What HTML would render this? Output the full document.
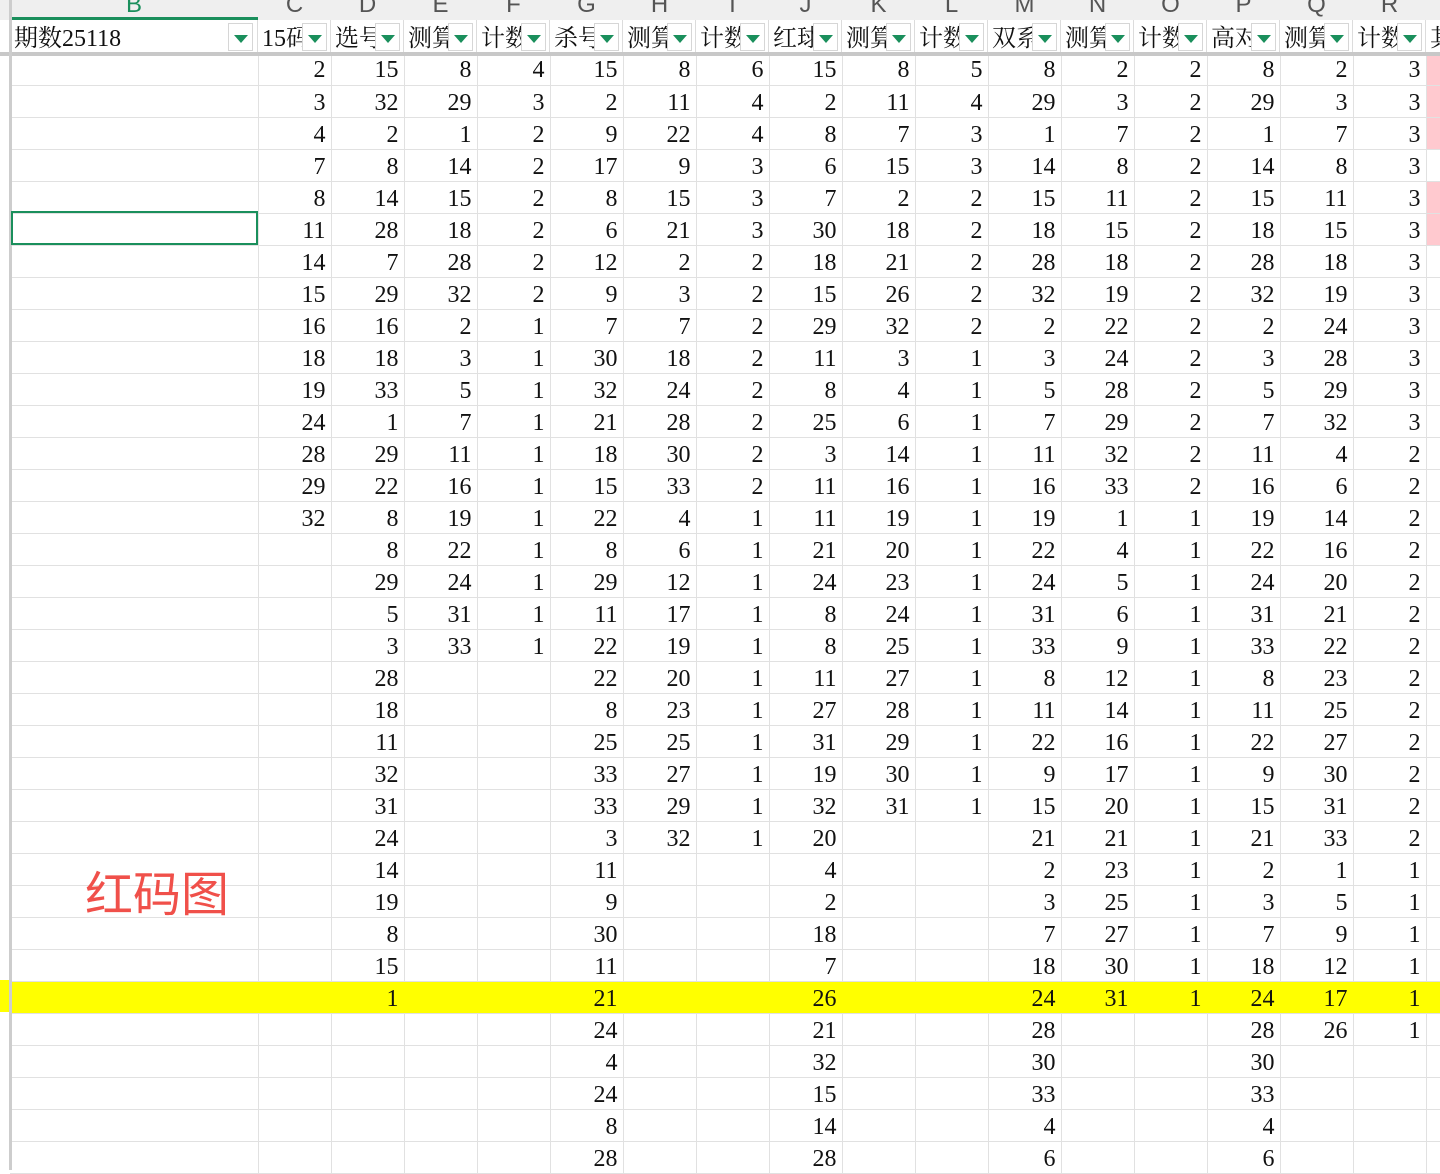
<!DOCTYPE html>
<html><head><meta charset="utf-8"><style>
body{margin:0;width:1440px;height:1170px;overflow:hidden;background:#fff;position:relative;font-family:"Liberation Serif","Noto Serif CJK SC",serif;}
.hdr{position:absolute;top:0;left:0;width:1440px;height:20px;background:#efefef;border-bottom:1px solid #d4d4d4;}
.hl{position:absolute;top:-9px;height:28px;font:24px "Liberation Sans",sans-serif;color:#555;text-align:center;line-height:28px;}
.frow{position:absolute;top:20px;left:0;width:1440px;height:32px;background:#fff;}
.fc{position:absolute;top:0;height:32px;overflow:hidden;border-right:1px solid #dcdcdc;font-size:24px;line-height:38px;color:#111;white-space:nowrap;padding-left:4px;box-sizing:border-box;}
.fb{position:absolute;top:3px;width:25px;height:28px;background:#fff;border:1px solid #d6d6d6;box-sizing:border-box;}
.fb:after{content:"";position:absolute;left:5px;top:11px;border-left:7px solid transparent;border-right:7px solid transparent;border-top:8px solid #1a8f5c;}
.bar{position:absolute;top:52px;left:0;width:1440px;height:4px;background:#c8c8c8;}
table{position:absolute;top:53px;left:10px;width:1436px;border-collapse:collapse;table-layout:fixed;}
tr{height:32px;}
td{height:31px;padding:4px 5px 0 0;box-sizing:border-box;border-right:1px solid #e1e1e1;border-bottom:1px solid #e1e1e1;text-align:right;font-size:24px;line-height:27px;color:#111;overflow:hidden;white-space:nowrap;}
.y td{background:#ff0;border-right-color:#ff0;}
.p{background:#ffc9cf;}
.vbar{position:absolute;top:0;left:9px;width:3px;height:1170px;background:#cdcdcd;}
.sel{position:absolute;left:11px;top:211px;width:247px;height:34px;border:2px solid #1a8f5c;box-sizing:border-box;}
.red{position:absolute;left:85px;top:855px;font:48px "Noto Sans CJK SC",sans-serif;color:#f0504a;}
</style></head><body>
<div class="hdr"></div>
<div style="position:absolute;left:12px;top:17px;width:246px;height:3px;background:#1a8f5c"></div>
<div class="hl" style="left:10px;width:248px;color:#1a8f5c">B</div>
<div class="hl" style="left:258px;width:73px">C</div><div class="hl" style="left:331px;width:73px">D</div><div class="hl" style="left:404px;width:73px">E</div><div class="hl" style="left:477px;width:73px">F</div><div class="hl" style="left:550px;width:73px">G</div><div class="hl" style="left:623px;width:73px">H</div><div class="hl" style="left:696px;width:73px">I</div><div class="hl" style="left:769px;width:73px">J</div><div class="hl" style="left:842px;width:73px">K</div><div class="hl" style="left:915px;width:73px">L</div><div class="hl" style="left:988px;width:73px">M</div><div class="hl" style="left:1061px;width:73px">N</div><div class="hl" style="left:1134px;width:73px">O</div><div class="hl" style="left:1207px;width:73px">P</div><div class="hl" style="left:1280px;width:73px">Q</div><div class="hl" style="left:1353px;width:73px">R</div>
<div class="frow">
<div class="fc" style="left:10px;width:248px">期数25118</div><div class="fb" style="left:228px"></div>
<div class="fc" style="left:258px;width:73px">15码</div><div class="fb" style="left:302px"></div>
<div class="fc" style="left:331px;width:73px">选号</div><div class="fb" style="left:375px"></div>
<div class="fc" style="left:404px;width:73px">测算</div><div class="fb" style="left:448px"></div>
<div class="fc" style="left:477px;width:73px">计数</div><div class="fb" style="left:521px"></div>
<div class="fc" style="left:550px;width:73px">杀号</div><div class="fb" style="left:594px"></div>
<div class="fc" style="left:623px;width:73px">测算</div><div class="fb" style="left:667px"></div>
<div class="fc" style="left:696px;width:73px">计数</div><div class="fb" style="left:740px"></div>
<div class="fc" style="left:769px;width:73px">红球</div><div class="fb" style="left:813px"></div>
<div class="fc" style="left:842px;width:73px">测算</div><div class="fb" style="left:886px"></div>
<div class="fc" style="left:915px;width:73px">计数</div><div class="fb" style="left:959px"></div>
<div class="fc" style="left:988px;width:73px">双系</div><div class="fb" style="left:1032px"></div>
<div class="fc" style="left:1061px;width:73px">测算</div><div class="fb" style="left:1105px"></div>
<div class="fc" style="left:1134px;width:73px">计数</div><div class="fb" style="left:1178px"></div>
<div class="fc" style="left:1207px;width:73px">高对</div><div class="fb" style="left:1251px"></div>
<div class="fc" style="left:1280px;width:73px">测算</div><div class="fb" style="left:1324px"></div>
<div class="fc" style="left:1353px;width:73px">计数</div><div class="fb" style="left:1397px"></div>
<div class="fc" style="left:1426px;width:30px">其</div>
</div>
<table>
<colgroup><col style="width:248px"><col style="width:73px"><col style="width:73px"><col style="width:73px"><col style="width:73px"><col style="width:73px"><col style="width:73px"><col style="width:73px"><col style="width:73px"><col style="width:73px"><col style="width:73px"><col style="width:73px"><col style="width:73px"><col style="width:73px"><col style="width:73px"><col style="width:73px"><col style="width:73px"><col style="width:20px"></colgroup>
<tr><td></td><td>2</td><td>15</td><td>8</td><td>4</td><td>15</td><td>8</td><td>6</td><td>15</td><td>8</td><td>5</td><td>8</td><td>2</td><td>2</td><td>8</td><td>2</td><td>3</td><td class="p"></td></tr>
<tr><td></td><td>3</td><td>32</td><td>29</td><td>3</td><td>2</td><td>11</td><td>4</td><td>2</td><td>11</td><td>4</td><td>29</td><td>3</td><td>2</td><td>29</td><td>3</td><td>3</td><td class="p"></td></tr>
<tr><td></td><td>4</td><td>2</td><td>1</td><td>2</td><td>9</td><td>22</td><td>4</td><td>8</td><td>7</td><td>3</td><td>1</td><td>7</td><td>2</td><td>1</td><td>7</td><td>3</td><td class="p"></td></tr>
<tr><td></td><td>7</td><td>8</td><td>14</td><td>2</td><td>17</td><td>9</td><td>3</td><td>6</td><td>15</td><td>3</td><td>14</td><td>8</td><td>2</td><td>14</td><td>8</td><td>3</td><td></td></tr>
<tr><td></td><td>8</td><td>14</td><td>15</td><td>2</td><td>8</td><td>15</td><td>3</td><td>7</td><td>2</td><td>2</td><td>15</td><td>11</td><td>2</td><td>15</td><td>11</td><td>3</td><td class="p"></td></tr>
<tr><td></td><td>11</td><td>28</td><td>18</td><td>2</td><td>6</td><td>21</td><td>3</td><td>30</td><td>18</td><td>2</td><td>18</td><td>15</td><td>2</td><td>18</td><td>15</td><td>3</td><td class="p"></td></tr>
<tr><td></td><td>14</td><td>7</td><td>28</td><td>2</td><td>12</td><td>2</td><td>2</td><td>18</td><td>21</td><td>2</td><td>28</td><td>18</td><td>2</td><td>28</td><td>18</td><td>3</td><td></td></tr>
<tr><td></td><td>15</td><td>29</td><td>32</td><td>2</td><td>9</td><td>3</td><td>2</td><td>15</td><td>26</td><td>2</td><td>32</td><td>19</td><td>2</td><td>32</td><td>19</td><td>3</td><td></td></tr>
<tr><td></td><td>16</td><td>16</td><td>2</td><td>1</td><td>7</td><td>7</td><td>2</td><td>29</td><td>32</td><td>2</td><td>2</td><td>22</td><td>2</td><td>2</td><td>24</td><td>3</td><td></td></tr>
<tr><td></td><td>18</td><td>18</td><td>3</td><td>1</td><td>30</td><td>18</td><td>2</td><td>11</td><td>3</td><td>1</td><td>3</td><td>24</td><td>2</td><td>3</td><td>28</td><td>3</td><td></td></tr>
<tr><td></td><td>19</td><td>33</td><td>5</td><td>1</td><td>32</td><td>24</td><td>2</td><td>8</td><td>4</td><td>1</td><td>5</td><td>28</td><td>2</td><td>5</td><td>29</td><td>3</td><td></td></tr>
<tr><td></td><td>24</td><td>1</td><td>7</td><td>1</td><td>21</td><td>28</td><td>2</td><td>25</td><td>6</td><td>1</td><td>7</td><td>29</td><td>2</td><td>7</td><td>32</td><td>3</td><td></td></tr>
<tr><td></td><td>28</td><td>29</td><td>11</td><td>1</td><td>18</td><td>30</td><td>2</td><td>3</td><td>14</td><td>1</td><td>11</td><td>32</td><td>2</td><td>11</td><td>4</td><td>2</td><td></td></tr>
<tr><td></td><td>29</td><td>22</td><td>16</td><td>1</td><td>15</td><td>33</td><td>2</td><td>11</td><td>16</td><td>1</td><td>16</td><td>33</td><td>2</td><td>16</td><td>6</td><td>2</td><td></td></tr>
<tr><td></td><td>32</td><td>8</td><td>19</td><td>1</td><td>22</td><td>4</td><td>1</td><td>11</td><td>19</td><td>1</td><td>19</td><td>1</td><td>1</td><td>19</td><td>14</td><td>2</td><td></td></tr>
<tr><td></td><td></td><td>8</td><td>22</td><td>1</td><td>8</td><td>6</td><td>1</td><td>21</td><td>20</td><td>1</td><td>22</td><td>4</td><td>1</td><td>22</td><td>16</td><td>2</td><td></td></tr>
<tr><td></td><td></td><td>29</td><td>24</td><td>1</td><td>29</td><td>12</td><td>1</td><td>24</td><td>23</td><td>1</td><td>24</td><td>5</td><td>1</td><td>24</td><td>20</td><td>2</td><td></td></tr>
<tr><td></td><td></td><td>5</td><td>31</td><td>1</td><td>11</td><td>17</td><td>1</td><td>8</td><td>24</td><td>1</td><td>31</td><td>6</td><td>1</td><td>31</td><td>21</td><td>2</td><td></td></tr>
<tr><td></td><td></td><td>3</td><td>33</td><td>1</td><td>22</td><td>19</td><td>1</td><td>8</td><td>25</td><td>1</td><td>33</td><td>9</td><td>1</td><td>33</td><td>22</td><td>2</td><td></td></tr>
<tr><td></td><td></td><td>28</td><td></td><td></td><td>22</td><td>20</td><td>1</td><td>11</td><td>27</td><td>1</td><td>8</td><td>12</td><td>1</td><td>8</td><td>23</td><td>2</td><td></td></tr>
<tr><td></td><td></td><td>18</td><td></td><td></td><td>8</td><td>23</td><td>1</td><td>27</td><td>28</td><td>1</td><td>11</td><td>14</td><td>1</td><td>11</td><td>25</td><td>2</td><td></td></tr>
<tr><td></td><td></td><td>11</td><td></td><td></td><td>25</td><td>25</td><td>1</td><td>31</td><td>29</td><td>1</td><td>22</td><td>16</td><td>1</td><td>22</td><td>27</td><td>2</td><td></td></tr>
<tr><td></td><td></td><td>32</td><td></td><td></td><td>33</td><td>27</td><td>1</td><td>19</td><td>30</td><td>1</td><td>9</td><td>17</td><td>1</td><td>9</td><td>30</td><td>2</td><td></td></tr>
<tr><td></td><td></td><td>31</td><td></td><td></td><td>33</td><td>29</td><td>1</td><td>32</td><td>31</td><td>1</td><td>15</td><td>20</td><td>1</td><td>15</td><td>31</td><td>2</td><td></td></tr>
<tr><td></td><td></td><td>24</td><td></td><td></td><td>3</td><td>32</td><td>1</td><td>20</td><td></td><td></td><td>21</td><td>21</td><td>1</td><td>21</td><td>33</td><td>2</td><td></td></tr>
<tr><td></td><td></td><td>14</td><td></td><td></td><td>11</td><td></td><td></td><td>4</td><td></td><td></td><td>2</td><td>23</td><td>1</td><td>2</td><td>1</td><td>1</td><td></td></tr>
<tr><td></td><td></td><td>19</td><td></td><td></td><td>9</td><td></td><td></td><td>2</td><td></td><td></td><td>3</td><td>25</td><td>1</td><td>3</td><td>5</td><td>1</td><td></td></tr>
<tr><td></td><td></td><td>8</td><td></td><td></td><td>30</td><td></td><td></td><td>18</td><td></td><td></td><td>7</td><td>27</td><td>1</td><td>7</td><td>9</td><td>1</td><td></td></tr>
<tr><td></td><td></td><td>15</td><td></td><td></td><td>11</td><td></td><td></td><td>7</td><td></td><td></td><td>18</td><td>30</td><td>1</td><td>18</td><td>12</td><td>1</td><td></td></tr>
<tr class="y"><td></td><td></td><td>1</td><td></td><td></td><td>21</td><td></td><td></td><td>26</td><td></td><td></td><td>24</td><td>31</td><td>1</td><td>24</td><td>17</td><td>1</td><td></td></tr>
<tr><td></td><td></td><td></td><td></td><td></td><td>24</td><td></td><td></td><td>21</td><td></td><td></td><td>28</td><td></td><td></td><td>28</td><td>26</td><td>1</td><td></td></tr>
<tr><td></td><td></td><td></td><td></td><td></td><td>4</td><td></td><td></td><td>32</td><td></td><td></td><td>30</td><td></td><td></td><td>30</td><td></td><td></td><td></td></tr>
<tr><td></td><td></td><td></td><td></td><td></td><td>24</td><td></td><td></td><td>15</td><td></td><td></td><td>33</td><td></td><td></td><td>33</td><td></td><td></td><td></td></tr>
<tr><td></td><td></td><td></td><td></td><td></td><td>8</td><td></td><td></td><td>14</td><td></td><td></td><td>4</td><td></td><td></td><td>4</td><td></td><td></td><td></td></tr>
<tr><td></td><td></td><td></td><td></td><td></td><td>28</td><td></td><td></td><td>28</td><td></td><td></td><td>6</td><td></td><td></td><td>6</td><td></td><td></td><td></td></tr>
</table>
<div class="bar"></div>
<div style="position:absolute;left:0;top:980px;width:10px;height:32px;background:#ff0"></div>
<div class="vbar"></div>
<div class="sel"></div>
<div class="red">红码图</div>
</body></html>
